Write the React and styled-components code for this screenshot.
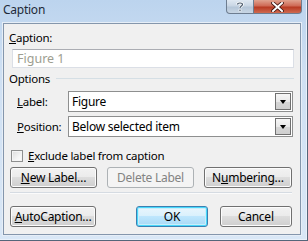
import React from 'react';
import styled, { createGlobalStyle, css } from 'styled-components';

const GlobalStyle = createGlobalStyle`
  html, body {
    margin: 0;
    padding: 0;
    background: #ffffff;
  }
  body {
    font-family: "Noto Sans", "Liberation Sans", sans-serif;
    font-size: 11.5px;
    letter-spacing: -0.25px;
    color: #000;
  }
`;

const Window = styled.div`
  width: 308px;
  height: 241px;
  box-sizing: border-box;
  display: flex;
  flex-direction: column;
  background: linear-gradient(180deg, #bcd4ee 0%, #cfe0f3 30%, #d9e7f6 100%);
  border-right: 1px solid #55657a;
  border-bottom: 1px solid #55657a;
  box-shadow: inset -1px -1px 0 #e9f1fa;
  padding: 0 6px 5px 3px;
  overflow: hidden;
`;

const TitleBar = styled.div`
  height: 23px;
  display: flex;
  align-items: flex-start;
  flex-shrink: 0;
`;

const Title = styled.div`
  line-height: 20px;
  font-size: 12px;
  color: #1e2a38;
  flex: 1;
`;

const CaptionButtons = styled.div`
  display: flex;
  margin-right: -1px;
`;

const CapButton = styled.div`
  height: 14px;
  display: flex;
  align-items: center;
  justify-content: center;
  box-sizing: border-box;
  border: 1px solid #6d7d90;
  border-top: none;
  ${p => p.$close ? css`
    width: 48px;
    border-radius: 0 0 4px 0;
    background: linear-gradient(180deg, #e0a28f 0%, #cf6a55 45%, #b83a22 55%, #cf6a50 100%);
    border-left: none;
  ` : css`
    width: 28px;
    border-radius: 0 0 0 4px;
    background: linear-gradient(180deg, #dfe8f2 0%, #c9d6e4 45%, #b5c6d8 55%, #c8d6e4 100%);
  `}
`;

const Client = styled.div`
  flex: 1;
  background: #f0f0f0;
  border: 1px solid #8496ac;
  box-shadow: 0 0 0 1px #e6eef7;
  padding: 0 6px 0 5px;
  display: flex;
  flex-direction: column;
`;

const Key = styled.span`
  text-decoration: underline;
  text-underline-offset: 1px;
`;

const FieldLabel = styled.div`
  margin-top: 6px;
  height: 16px;
  line-height: 16px;
`;

const TextField = styled.div`
  margin: 3px 0 0 3px;
  height: 19px;
  box-sizing: border-box;
  background: #fff;
  border: 1px solid #dbdfe6;
  border-top-color: #abadb3;
  padding-left: 4px;
  line-height: 17px;
  color: #9d9d90;
  font-size: 12.5px;
  letter-spacing: 0;
`;

const GroupHeader = styled.div`
  margin-top: 2px;
  height: 16px;
  display: flex;
  align-items: center;
  gap: 6px;
  &::after {
    content: '';
    flex: 1;
    height: 1px;
    background: #d5dfe5;
    margin-top: 1px;
  }
`;

const FormRow = styled.div`
  margin-top: ${p => p.$gap}px;
  height: 21px;
  display: flex;
  align-items: center;
  padding-left: 8px;
  padding-right: 1px;
`;

const RowLabel = styled.div`
  width: 51px;
`;

const Combo = styled.div`
  flex: 1;
  height: 21px;
  box-sizing: border-box;
  background: #fff;
  border: 1px solid #8e8f8f;
  display: flex;
  align-items: stretch;
`;

const ComboText = styled.div`
  flex: 1;
  padding-left: 3px;
  line-height: 19px;
  font-size: 12px;
`;

const ComboArrow = styled.div`
  width: 16px;
  margin: 1px;
  box-sizing: border-box;
  border: 1px solid #707070;
  background: linear-gradient(180deg, #f6f6f6 0%, #e9e9e9 50%, #d6d6d6 51%, #cfcfcf 100%);
  display: flex;
  align-items: center;
  justify-content: center;
  &::before {
    content: '';
    border-left: 3.5px solid transparent;
    border-right: 3.5px solid transparent;
    border-top: 4px solid #000;
    margin-top: 1px;
  }
`;

const CheckRow = styled.label`
  margin-top: 12px;
  height: 13px;
  display: flex;
  align-items: center;
  gap: 5px;
  padding-left: 2px;
`;

const CheckBox = styled.span`
  width: 12px;
  height: 12px;
  box-sizing: border-box;
  border: 1px solid #8e8f8f;
  background: linear-gradient(135deg, #dcdcdc 0%, #f4f4f4 60%, #ffffff 100%);
  box-shadow: inset 0 0 0 1px #f4f4f4;
`;

const ButtonRow = styled.div`
  margin-top: ${p => p.$gap}px;
  display: flex;
  justify-content: ${p => p.$spread ? 'space-between' : 'flex-start'};
  padding: 0 2px 0 1px;
`;

const Button = styled.div`
  width: ${p => p.$w}px;
  margin-left: ${p => p.$ml || 0}px;
  height: 21px;
  box-sizing: border-box;
  border-radius: 3px;
  display: flex;
  align-items: center;
  justify-content: center;
  font-size: 12px;
  border: 1px solid #707070;
  background: linear-gradient(180deg, #f2f2f2 0%, #ebebeb 49%, #dddddd 50%, #cfcfcf 100%);
  box-shadow: inset 0 0 0 1px #fcfcfc;
  ${p => p.$disabled && css`
    border-color: #adb2b5;
    background: #f4f4f4;
    color: #838383;
    box-shadow: none;
  `}
  ${p => p.$default && css`
    border-color: #3c7fb1;
    box-shadow: inset 0 0 0 1px #48d8fb, inset 0 0 0 2px #c9eefb;
    background: linear-gradient(180deg, #eaf6fd 0%, #d9f0fc 49%, #bee6fd 50%, #a7d9f5 100%);
  `}
`;

const Separator = styled.div`
  margin: 4px 2px 0 1px;
  height: 1px;
  background: #d5dbe2;
  border-bottom: 1px solid #fbfbfb;
`;

function HelpGlyph() {
  return (
    <svg width="10" height="11" viewBox="0 0 10 11">
      <path d="M2.5 3.5 C2.5 1.5 7.5 1.5 7.5 3.5 C7.5 5 5 5.2 5 7" fill="none" stroke="#ffffff" strokeWidth="2.6" />
      <path d="M2.5 3.5 C2.5 1.5 7.5 1.5 7.5 3.5 C7.5 5 5 5.2 5 7" fill="none" stroke="#4a5a6c" strokeWidth="1.2" />
      <rect x="4" y="8.2" width="2" height="2" fill="#4a5a6c" stroke="#fff" strokeWidth="0.6" />
    </svg>
  );
}

function CloseGlyph() {
  return (
    <svg width="13" height="10" viewBox="0 0 13 10">
      <path d="M2 1 L11 9 M11 1 L2 9" stroke="#3d1410" strokeWidth="3.6" strokeLinecap="square" />
      <path d="M2 1 L11 9 M11 1 L2 9" stroke="#ffffff" strokeWidth="2" strokeLinecap="square" />
    </svg>
  );
}

export default function App() {
  return (
    <>
      <GlobalStyle />
      <Window>
        <TitleBar>
          <Title>Caption</Title>
          <CaptionButtons>
            <CapButton><HelpGlyph /></CapButton>
            <CapButton $close><CloseGlyph /></CapButton>
          </CaptionButtons>
        </TitleBar>
        <Client>
          <FieldLabel><Key>C</Key>aption:</FieldLabel>
          <TextField>Figure 1</TextField>
          <GroupHeader>Options</GroupHeader>
          <FormRow $gap={5}>
            <RowLabel><Key>L</Key>abel:</RowLabel>
            <Combo>
              <ComboText>Figure</ComboText>
              <ComboArrow />
            </Combo>
          </FormRow>
          <FormRow $gap={4}>
            <RowLabel><Key>P</Key>osition:</RowLabel>
            <Combo>
              <ComboText>Below selected item</ComboText>
              <ComboArrow />
            </Combo>
          </FormRow>
          <CheckRow>
            <CheckBox />
            <span><Key>E</Key>xclude label from caption</span>
          </CheckRow>
          <ButtonRow $gap={5} $spread>
            <Button $w={87}><span><Key>N</Key>ew Label…</span></Button>
            <Button $w={87} $disabled>Delete Label</Button>
            <Button $w={88}><span>N<Key>u</Key>mbering…</span></Button>
          </ButtonRow>
          <Separator />
          <ButtonRow $gap={12}>
            <Button $w={87}><span><Key>A</Key>utoCaption…</span></Button>
            <Button $w={72} $ml={40} $default>OK</Button>
            <Button $w={73} $ml={12}>Cancel</Button>
          </ButtonRow>
        </Client>
      </Window>
    </>
  );
}
